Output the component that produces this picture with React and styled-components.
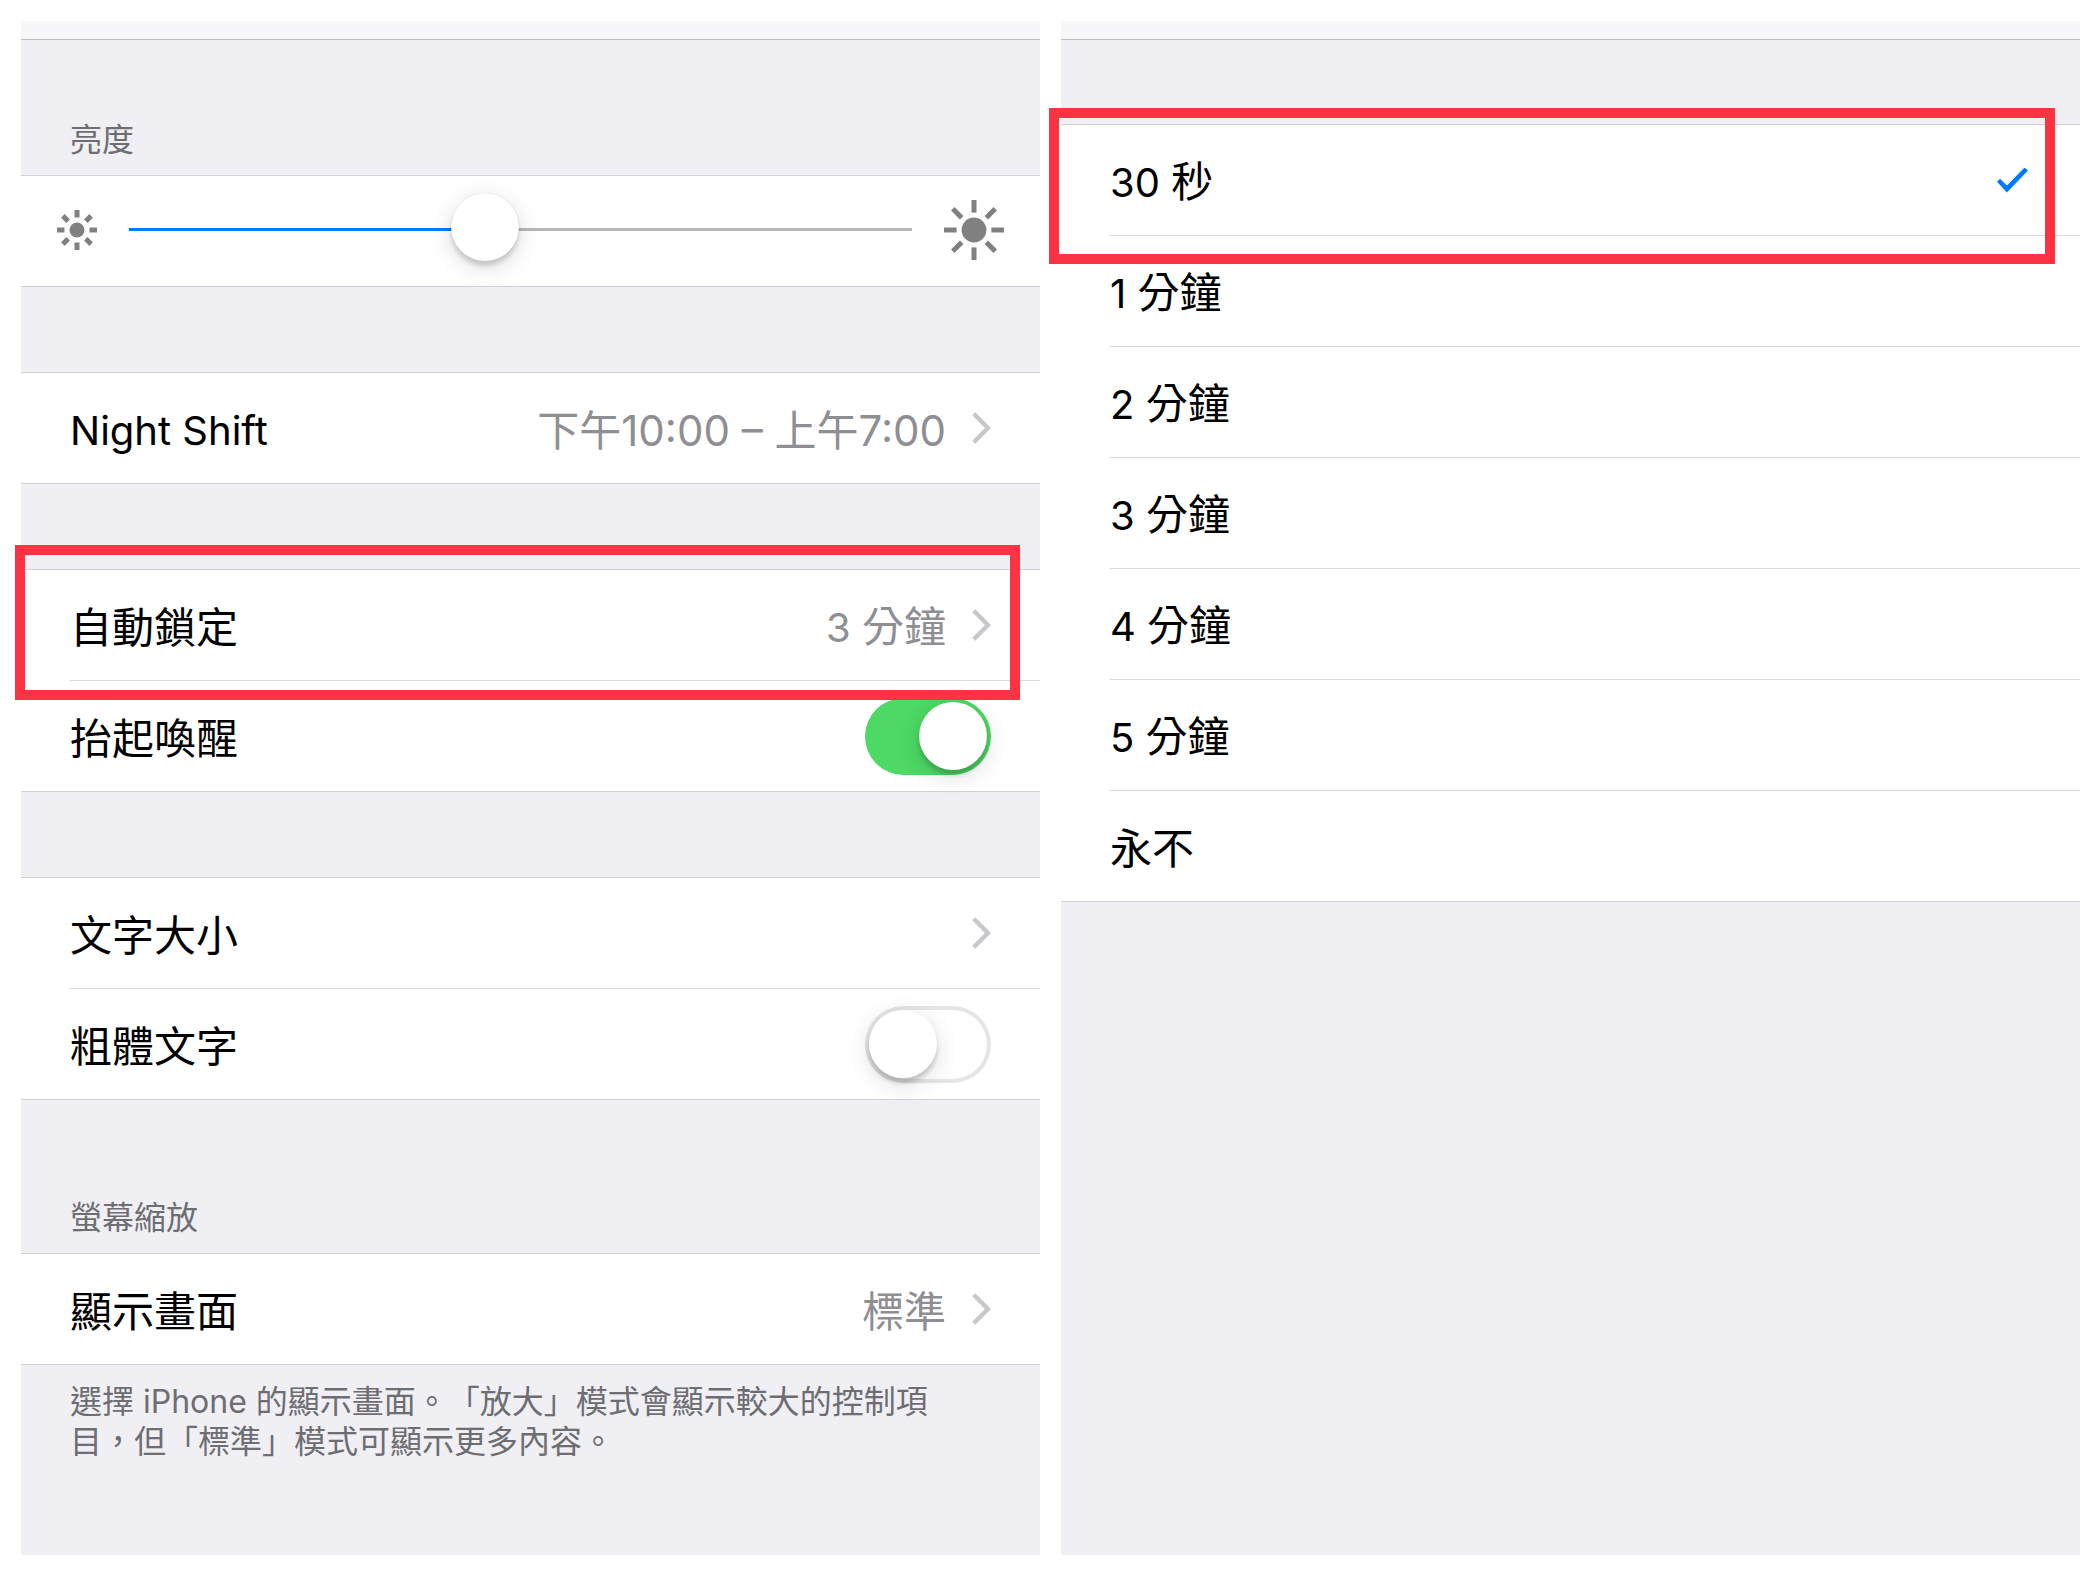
import { useState } from 'react';
import { createGlobalStyle, styled } from 'styled-components';

const GlobalStyle = createGlobalStyle`
  *, *::before, *::after {
    box-sizing: border-box;
  }

  body {
    margin: 0;
    background: #fff;
    color: #000;
    font-family: Inter, 'Noto Sans CJK TC', sans-serif;
    font-size: 42px;
    line-height: 60px;
    text-spacing-trim: space-all;
  }
`;

const Page = styled.main`
  display: grid;
  grid-template-columns: 1fr 1fr;
  gap: 21px;
  min-height: 100vh;
  padding: 21px 20px 20px 21px;
`;

const Panel = styled.section`
  min-width: 0;
  background: #efeff4;
`;

const NavEdge = styled.div`
  height: 19px;
  background: #f7f7f9;
  border-bottom: 1px solid #bcbcbf;
`;

const Group = styled.div`
  margin-top: ${props => props.$space || 85}px;
  background: #fff;
  border-top: 1px solid #d2d1d7;
  border-bottom: 1px solid #d2d1d7;
`;

const GroupTitle = styled.h2`
  display: flex;
  align-items: flex-end;
  height: ${props => props.$height}px;
  margin: 0;
  padding: 0 49px 15px;
  color: #6d6d72;
  font-size: 32px;
  font-weight: 400;
  line-height: 40px;

  & + ${Group} {
    margin-top: 0;
  }
`;

const GroupNote = styled.p`
  margin: 0;
  padding: 17px 80px 0 49px;
  color: #6d6d72;
  font-size: 32px;
  line-height: 40px;
`;

const Item = styled.div`
  position: relative;

  & + & > * {
    border-top: 1px solid #dad9de;
    height: 111px;
  }

  & + & {
    padding-left: 49px;
  }

  & + & > * {
    padding-left: 0;
  }
`;

const Row = styled.div`
  display: flex;
  align-items: center;
  gap: 26px;
  width: 100%;
  height: 110px;
  padding: 0 49px;
`;

const RowButton = styled(Row).attrs({ as: 'button', type: 'button' })`
  border: 0;
  background: none;
  color: inherit;
  font: inherit;
  text-align: left;
  cursor: pointer;
`;

const OptionRow = styled(Row).attrs({ as: 'label' })`
  padding-right: 52px;
  cursor: pointer;
`;

const RowLabel = styled.span`
  flex: 1;
  padding-top: 5px;
`;

const RowValue = styled.span`
  padding-top: 5px;
  color: #8e8e93;
`;

// Inter runs wide next to the Chinese glyphs
const Latin = styled.span`
  font-size: 40px;
`;

const Highlight = styled.div`
  position: absolute;
  z-index: 1;
  inset: ${props => props.$inset};
  border: 10px solid #fd3243;
  pointer-events: none;
`;

const SliderRow = styled.div`
  display: flex;
  align-items: center;
  gap: 32px;
  height: 110px;
  padding: 0 36px 3px;
`;

const Slider = styled.input`
  appearance: none;
  flex: 1;
  min-width: 0;
  height: 69px;
  margin: 0;
  background: transparent;

  &::-webkit-slider-runnable-track {
    height: 3px;
    background: linear-gradient(
      to right,
      #007aff ${props => props.value}%,
      #b7b7b7 ${props => props.value}%
    );
  }

  &::-webkit-slider-thumb {
    appearance: none;
    width: 68px;
    height: 68px;
    margin-top: -35px;
    border-radius: 50%;
    background: #fff;
    box-shadow: 0 0 1px rgba(0, 0, 0, 0.2), 0 5px 4px rgba(0, 0, 0, 0.14),
      0 6px 24px rgba(0, 0, 0, 0.14);
  }
`;

const Switch = styled.input`
  appearance: none;
  width: 126px;
  height: 77px;
  margin: 0;
  padding: 4px;
  border-radius: 39px;
  background: #fff;
  box-shadow: inset 0 0 0 4px #e5e5e5;
  cursor: pointer;

  &::before {
    content: '';
    display: block;
    width: 68px;
    height: 68px;
    border-radius: 50%;
    background: #fff;
    box-shadow: 0 5px 4px rgba(0, 0, 0, 0.16), 0 6px 24px rgba(0, 0, 0, 0.14);
  }

  &:checked {
    background: #4cd964;
    box-shadow: none;
  }

  &:checked::before {
    margin-left: 50px;
  }
`;

const CheckRadio = styled.input`
  appearance: none;
  width: 31px;
  height: 25px;
  margin: 0;
  clip-path: polygon(0 57%, 10% 45%, 32% 72%, 89% 0, 100% 12%, 32% 100%);

  &:checked {
    background: #007aff;
  }
`;

function Chevron() {
  return (
    <svg width="19" height="32" viewBox="0 0 19 32" fill="none" aria-hidden="true">
      <path d="M1.8 1.8 L16 16 L1.8 30.2" stroke="#c7c7cc" strokeWidth="4.4" />
    </svg>
  );
}

function Sun({ size, core, inner }) {
  const r = size / 2;
  return (
    <svg width={size} height={size} viewBox={`${-r} ${-r} ${size} ${size}`} aria-hidden="true">
      <circle r={core} fill="#808080" />
      {[0, 45, 90, 135, 180, 225, 270, 315].map(angle => (
        <path
          key={angle}
          d={`M0 ${-inner} V${-r}`}
          stroke="#808080"
          strokeWidth="5"
          transform={`rotate(${angle})`}
        />
      ))}
    </svg>
  );
}

function LinkItem({ label, value, children }) {
  return (
    <Item>
      <RowButton>
        <RowLabel>{label}</RowLabel>
        {value && <RowValue>{value}</RowValue>}
        <Chevron />
      </RowButton>
      {children}
    </Item>
  );
}

function SwitchItem({ label, defaultChecked }) {
  return (
    <Item>
      <Row as="label">
        <RowLabel>{label}</RowLabel>
        <Switch type="checkbox" role="switch" defaultChecked={defaultChecked} />
      </Row>
    </Item>
  );
}

function Duration({ amount, unit }) {
  return (
    <>
      {amount && <Latin>{amount} </Latin>}
      {unit}
    </>
  );
}

const lockOptions = [
  { amount: 30, unit: '秒' },
  { amount: 1, unit: '分鐘' },
  { amount: 2, unit: '分鐘' },
  { amount: 3, unit: '分鐘' },
  { amount: 4, unit: '分鐘' },
  { amount: 5, unit: '分鐘' },
  { unit: '永不' },
];

export default function App() {
  const [brightness, setBrightness] = useState(45);
  const [lockIndex, setLockIndex] = useState(0);

  return (
    <Page lang="zh-Hant">
      <GlobalStyle />
      <Panel>
        <NavEdge />
        <GroupTitle $height={135}>亮度</GroupTitle>
        <Group>
          <SliderRow>
            <Sun size={40} core={7.5} inner={12.5} />
            <Slider
              type="range"
              aria-label="亮度"
              value={brightness}
              onChange={event => setBrightness(Number(event.target.value))}
            />
            <Sun size={60} core={12.4} inner={17.4} />
          </SliderRow>
        </Group>

        <Group>
          <LinkItem label={<Latin>Night Shift</Latin>} value="下午10:00 – 上午7:00" />
        </Group>

        <Group>
          <LinkItem label="自動鎖定" value={<Duration amount={3} unit="分鐘" />}>
            <Highlight $inset="-25px 20px -20px -6px" />
          </LinkItem>
          <SwitchItem label="抬起喚醒" defaultChecked />
        </Group>

        <Group>
          <LinkItem label="文字大小" />
          <SwitchItem label="粗體文字" />
        </Group>

        <GroupTitle $height={153}>螢幕縮放</GroupTitle>
        <Group>
          <LinkItem label="顯示畫面" value="標準" />
        </Group>
        <GroupNote>
          選擇 iPhone 的顯示畫面。「放大」模式會顯示較大的控制項目，但「標準」模式可顯示更多內容。
        </GroupNote>
      </Panel>

      <Panel>
        <NavEdge />
        <Group $space={84}>
          {lockOptions.map((option, index) => (
            <Item key={index}>
              <OptionRow>
                <RowLabel>
                  <Duration {...option} />
                </RowLabel>
                <CheckRadio
                  type="radio"
                  name="auto-lock"
                  checked={lockIndex === index}
                  onChange={() => setLockIndex(index)}
                />
              </OptionRow>
              {index === 0 && <Highlight $inset="-17px 25px -29px -12px" />}
            </Item>
          ))}
        </Group>
      </Panel>
    </Page>
  );
}
